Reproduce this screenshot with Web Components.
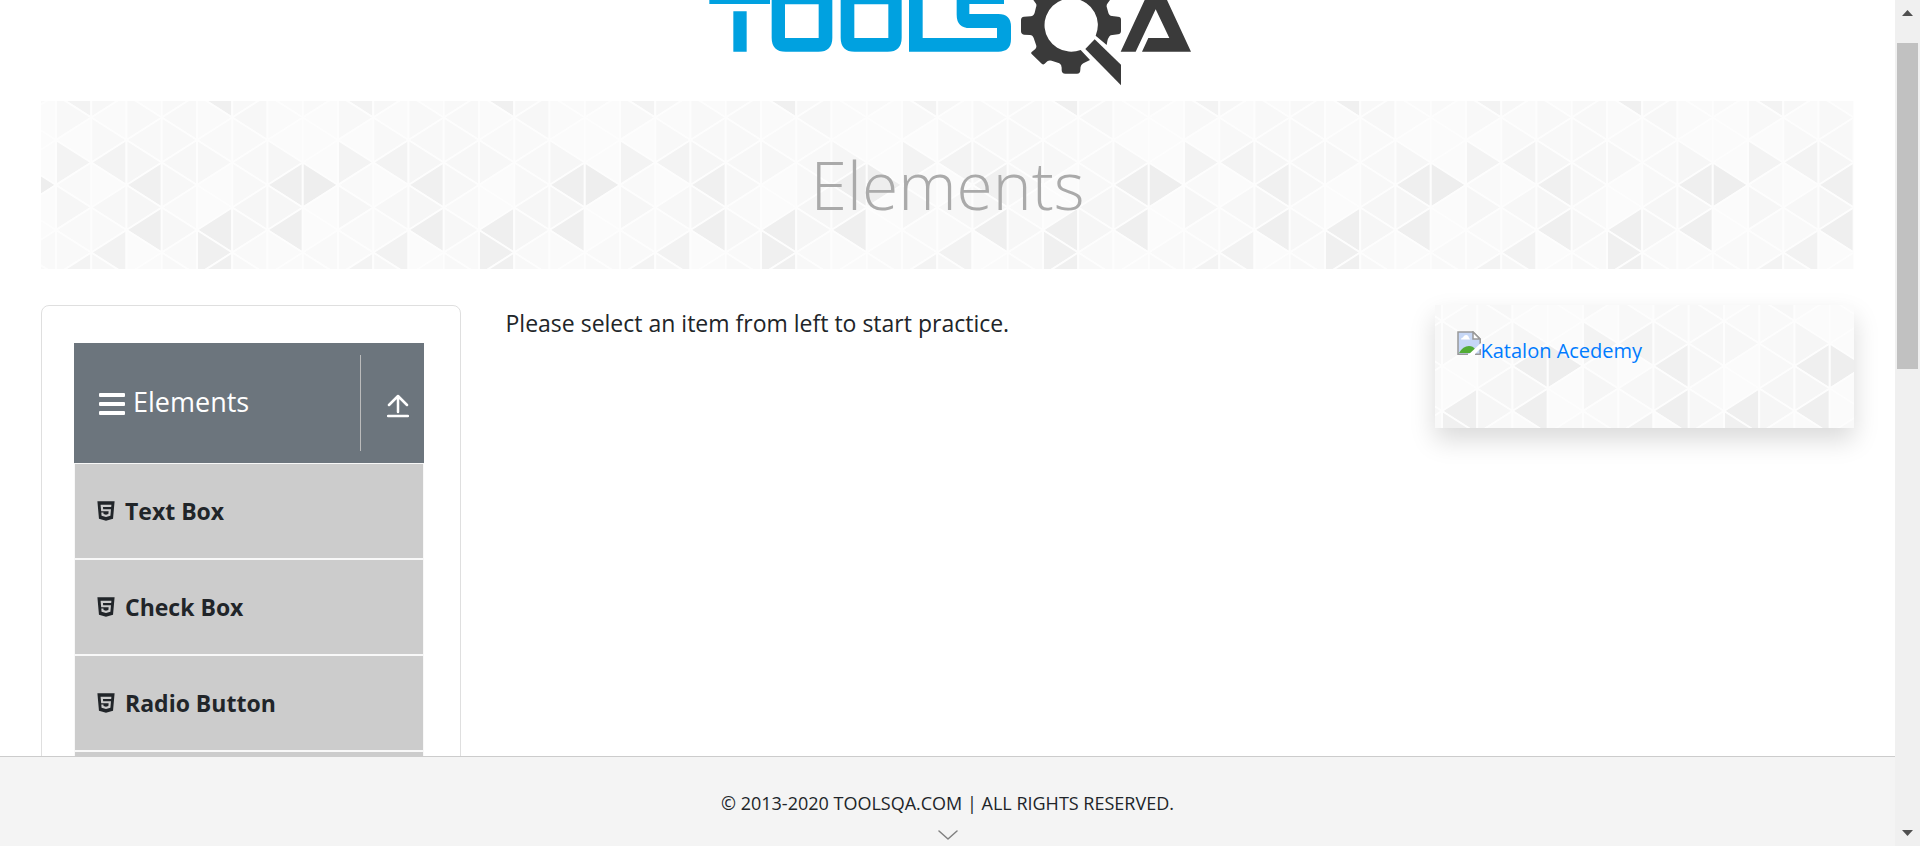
<!DOCTYPE html>
<html lang="en">
<head>
<meta charset="utf-8">
<title>ToolsQA - Elements</title>
<style>
  html, body { margin: 0; height: 100%; }
  body {
    font-family: "Open Sans", "Noto Sans", sans-serif;
    font-size: 23px;
    line-height: 36px;
    color: #212529;
    background: #fff;
    overflow: hidden;
  }
</style>
</head>
<body>
<demo-shell>
  <tools-logo slot="page"></tools-logo>
  <page-banner slot="page">Elements</page-banner>
  <content-grid slot="page">
    <side-menu slot="left" heading="Elements">
      <menu-entry href="#text-box">Text Box</menu-entry>
      <menu-entry href="#checkbox">Check Box</menu-entry>
      <menu-entry href="#radio-button">Radio Button</menu-entry>
      <menu-entry href="#webtables">Web Tables</menu-entry>
    </side-menu>
    <span>Please select an item from left to start practice.</span>
    <sponsor-card slot="right" href="#katalon">Katalon Acedemy</sponsor-card>
  </content-grid>
  <site-footer slot="footer">© 2013-2020 TOOLSQA.COM | ALL RIGHTS RESERVED.</site-footer>
  <scroll-rail slot="rail"></scroll-rail>
</demo-shell>

<script>
function define(name, html, setup) {
  const template = document.createElement('template');
  template.innerHTML = html;
  customElements.define(name, class extends HTMLElement {
    constructor() {
      super();
      this.attachShadow({ mode: 'open' }).append(template.content.cloneNode(true));
    }
    connectedCallback() {
      if (setup) setup(this, this.shadowRoot);
    }
  });
}

define('demo-shell', `
  <style>
    :host { display: grid; grid-template-columns: minmax(0, 1fr) 25px; height: 100vh; }
    .view { display: flex; flex-direction: column; min-height: 0; }
    main { flex: 1; min-height: 0; overflow: hidden; padding: 0 41px; }
  </style>
  <div class="view">
    <main><slot name="page"></slot></main>
    <slot name="footer"></slot>
  </div>
  <slot name="rail"></slot>`);

define('tools-logo', `
  <style>
    :host { display: flex; justify-content: center; height: 101px; }
    svg { width: 515px; height: 100px; }
  </style>
  <svg viewBox="0 0 1545 300" role="img" aria-label="Tools QA">
    <g fill="#00a1e0">
      <path d="M58-10H240V12H58ZM130 34H170V155H130Z"/>
      <path fill-rule="evenodd" d="M245-28H427V113Q427 155 385 155H287Q245 155 245 113ZM285 13V114H386V13Z"/>
      <path fill-rule="evenodd" d="M452-28H635V113Q635 155 593 155H494Q452 155 452 113ZM493 13V114H595V13Z"/>
      <path d="M800-10V44Q800 84 840 84H921V114H698V-10H657V155H925Q963 155 963 117V80Q963 42 925 42H838V12H942V-10Z"/>
    </g>
    <g fill="#3a3a3a">
      <path d="M1030-20V0L1037 10Q1041 14 1038 22L1034 38Q1031 48 1022 49L1002 50Q993 51 993 60V94Q993 103 1002 104L1020 105Q1028 105 1031 114L1038 134Q1041 142 1036 147L1025 156Q1022 159 1025 162L1056 192Q1060 195 1064 191L1072 184Q1077 180 1085 182L1108 190Q1115 194 1115 203V210Q1115 221 1126 221H1161Q1171 221 1171 209Q1171 194 1180 190L1200 180 1172 150A80 80 0 1 1 1217 107L1250 135Q1253 111 1262 106L1284 103Q1293 102 1293 93V59Q1293 50 1284 50L1266 48Q1257 47 1255 38L1250 20Q1249 14 1253 10L1260 0V-20Z"/>
      <path d="M1214 118L1293 194V256L1186 147Z"/>
      <path d="M1364 0L1292 155H1337L1397 28 1438 114H1375L1356 155H1503L1431 0Z"/>
    </g>
  </svg>`);

/* Repeating field of triangles; attributes "dx" and "dy" shift the tile. */
define('triangle-field', `
  <style>
    :host { display: block; }
    svg { display: block; width: 100%; height: 100%; }
  </style>
  <svg aria-hidden="true">
    <defs><pattern id="tile" width="282" height="180" patternUnits="userSpaceOnUse"></pattern></defs>
    <rect width="100%" height="100%" fill="url(#tile)"/>
  </svg>`, (host, root) => {
  const W = 35.25, H = 22.5;
  const shades = [
    ['f3', 'f7', 'fa', 'f8', 'f0', 'f8', 'fa', 'f9'],
    ['f8', 'fa', 'f8', 'f8', 'fa', 'f7', 'fa', 'fb'],
    ['fb', 'f8', 'f8', 'f8', 'f9', 'f9', 'fb', 'fb'],
    ['f3', 'f3', 'f6', 'f7', 'f7', 'f8', 'f6', 'fb'],
    ['f9', 'fb', 'f0', 'f7', 'fb', 'f8', 'ef', 'ee'],
    ['f6', 'f7', 'f6', 'f9', 'fb', 'f6', 'f6', 'fb'],
    ['f9', 'f9', 'ef', 'f7', 'ef', 'f6', 'ef', 'fb'],
    ['f9', 'f2', 'fb', 'f9', 'f0', 'f9', 'fa', 'f9']
  ];
  let d = '';
  for (let k = -1; k <= 8; k++) {
    for (let j = -1; j <= 9; j++) {
      const x = k * W, y = j * H, shade = shades[(j + 8) % 8][(k + 8) % 8];
      const pointsLeft = (k + j) % 2 === 0;
      const base = pointsLeft ? x + W : x, tip = pointsLeft ? x : x + W;
      d += `<path fill="#${shade.repeat(3)}" d="M${base} ${y - H}V${y + H}L${tip} ${y}Z"/>`;
    }
  }
  const tile = root.querySelector('pattern');
  tile.innerHTML = `<g stroke="#fdfdfd" stroke-width="2" stroke-linejoin="round">${d}</g>`;
  tile.setAttribute('patternTransform',
    `translate(${host.getAttribute('dx')} ${host.getAttribute('dy')})`);
});

define('page-banner', `
  <style>
    :host { display: grid; height: 168px; margin-bottom: 36px; }
    triangle-field, h1 { grid-area: 1 / 1; min-height: 0; }
    h1 {
      margin: 0; padding-bottom: 2px; align-self: center; text-align: center;
      font-size: 66px; line-height: 96px; font-weight: 300; color: #aaa;
    }
  </style>
  <triangle-field dx="15" dy="-6"></triangle-field>
  <h1><slot></slot></h1>`);

define('content-grid', `
  <style>
    :host { display: grid; grid-template-columns: repeat(4, minmax(0, 1fr)); column-gap: 45px; align-items: start; }
    .body { grid-column: span 2; font-size: 23px; }
  </style>
  <slot name="left"></slot>
  <div class="body"><slot></slot></div>
  <slot name="right"></slot>`);

define('side-menu', `
  <style>
    :host { display: block; border: 1px solid #dfdfdf; border-radius: 8px; padding: 37px 36px 36px 32px; }
    button {
      display: flex; align-items: center; width: 100%; height: 120px; box-sizing: border-box;
      border: 0; margin: 0; padding: 12px 15px 12px 25px;
      background: #6c757d; color: #fff; font: inherit; font-size: 27px; text-align: left;
    }
    .menu { width: 26px; height: 24px; margin-right: 8px; padding-top: 2px; }
    .label { flex: 1; padding-bottom: 2px; }
    .toggle { display: flex; align-items: center; height: 96px; padding-left: 26px; border-left: 1px solid #bbb; }
    .toggle svg { width: 22px; height: 24px; padding-top: 6px; }
  </style>
  <button type="button" aria-expanded="true">
    <svg class="menu" viewBox="0 0 26 24" fill="#fff" aria-hidden="true">
      <rect y="1" width="26" height="4" rx="1"/><rect y="10" width="26" height="4" rx="1"/><rect y="19" width="26" height="4" rx="1"/>
    </svg>
    <span class="label"></span>
    <span class="toggle">
      <svg viewBox="0 0 22 24" fill="none" stroke="#fff" stroke-width="2.500" stroke-linecap="round" stroke-linejoin="round" aria-hidden="true">
        <path d="M11 18V2M2 11L11 2 20 11M1 22H21"/>
      </svg>
    </span>
  </button>
  <nav><slot></slot></nav>`, (host, root) => {
  root.querySelector('.label').textContent = host.getAttribute('heading');
});

define('menu-entry', `
  <style>
    :host { display: block; }
    a {
      display: flex; align-items: center; gap: 7px; height: 96px; box-sizing: border-box;
      padding: 0 19px; border: 1px solid #f8f8f8; background: #ccc;
      color: #212529; font-weight: 700; text-decoration: none;
    }
    svg { width: 24px; height: 24px; }
  </style>
  <a>
    <svg viewBox="0 0 1024 1024" fill="#212529" aria-hidden="true">
      <path d="M145.2 96l66 746.6L512 928l299.6-85.4L878.9 96H145.2zm595 177.1l-4.8 47.2-1.7 19.5H382.3l8.2 94.2h335.1l-3.3 24.3-21.2 242.2-1.7 16.2-187 51.6v.3h-1.2l-.3.1v-.1h-.1l-188.6-52L310.8 572h91.1l6.5 73.2 102.4 27.7h.4l102-27.6 11.4-118.6H510.9v-.1H306l-22.8-253.5-1.7-24.3h460.3l-1.6 24.3z"/>
    </svg>
    <span><slot></slot></span>
  </a>`, (host, root) => {
  root.querySelector('a').href = host.getAttribute('href');
});

define('sponsor-card', `
  <style>
    :host { display: grid; height: 123px; box-shadow: 0 12px 24px rgba(0, 0, 0, .15); }
    triangle-field, a { grid-area: 1 / 1; min-height: 0; }
    a {
      display: flex; align-self: start; justify-self: start; padding: 26px 22px;
      color: #007bff; text-decoration: none; font-size: 20px; line-height: 40px;
    }
    svg { width: 24px; height: 24px; }
  </style>
  <triangle-field dx="-134" dy="-29"></triangle-field>
  <a>
    <svg viewBox="0 0 24 24" aria-hidden="true">
      <path fill="#c6d7f6" d="M1 1H16L23 8V23H1Z"/>
      <path fill="#fff" d="M4 8.500Q4 6.500 6 6.500Q6.500 4 9 4Q11.500 4 12 7Q13 7.500 13 8.500Z"/>
      <path fill="#52ac35" d="M2 22Q6 15 12 15Q16 15 18 18V22Z"/>
      <path fill="none" stroke="#999" stroke-width="1.500" d="M11 23.200H1V1H16L23.200 8V13M18 23.200H23.200V18"/>
      <path fill="#fff" stroke="#999" stroke-width="1.500" d="M16 1V8H23Z"/>
      <path fill="#fff" d="M11 24L24 12V17L17 24Z"/>
    </svg>
    <span><slot></slot></span>
  </a>`, (host, root) => {
  root.querySelector('a').href = host.getAttribute('href');
});

define('site-footer', `
  <style>
    :host {
      display: flex; flex-direction: column; align-items: center; gap: 10px;
      height: 90px; box-sizing: border-box; padding-top: 32px;
      border-top: 1px solid #ccc; background: #f4f4f4;
      font-size: 18px; line-height: 28px;
    }
    svg { width: 20px; height: 16px; }
  </style>
  <span><slot></slot></span>
  <svg viewBox="0 0 20 16" fill="none" stroke="#808080" stroke-width="1.500" stroke-linecap="round" stroke-linejoin="round" aria-hidden="true">
    <path d="M1 4L10 12 19 4"/>
  </svg>`);

define('scroll-rail', `
  <style>
    :host { display: flex; flex-direction: column; align-items: center; background: #f0f0f0; }
    svg { width: 11px; height: 6px; flex: none; fill: #505050; margin: 10px 0; }
    .track { flex: 1; width: 21px; padding-top: 17px; }
    .thumb { height: 42%; background: #c1c1c1; }
  </style>
  <svg viewBox="0 0 11 6" aria-hidden="true"><path d="M0 6L5.500 0 11 6Z"/></svg>
  <div class="track"><div class="thumb"></div></div>
  <svg viewBox="0 0 11 6" aria-hidden="true"><path d="M0 0L5.500 6 11 0Z"/></svg>`);
</script>
</body>
</html>
